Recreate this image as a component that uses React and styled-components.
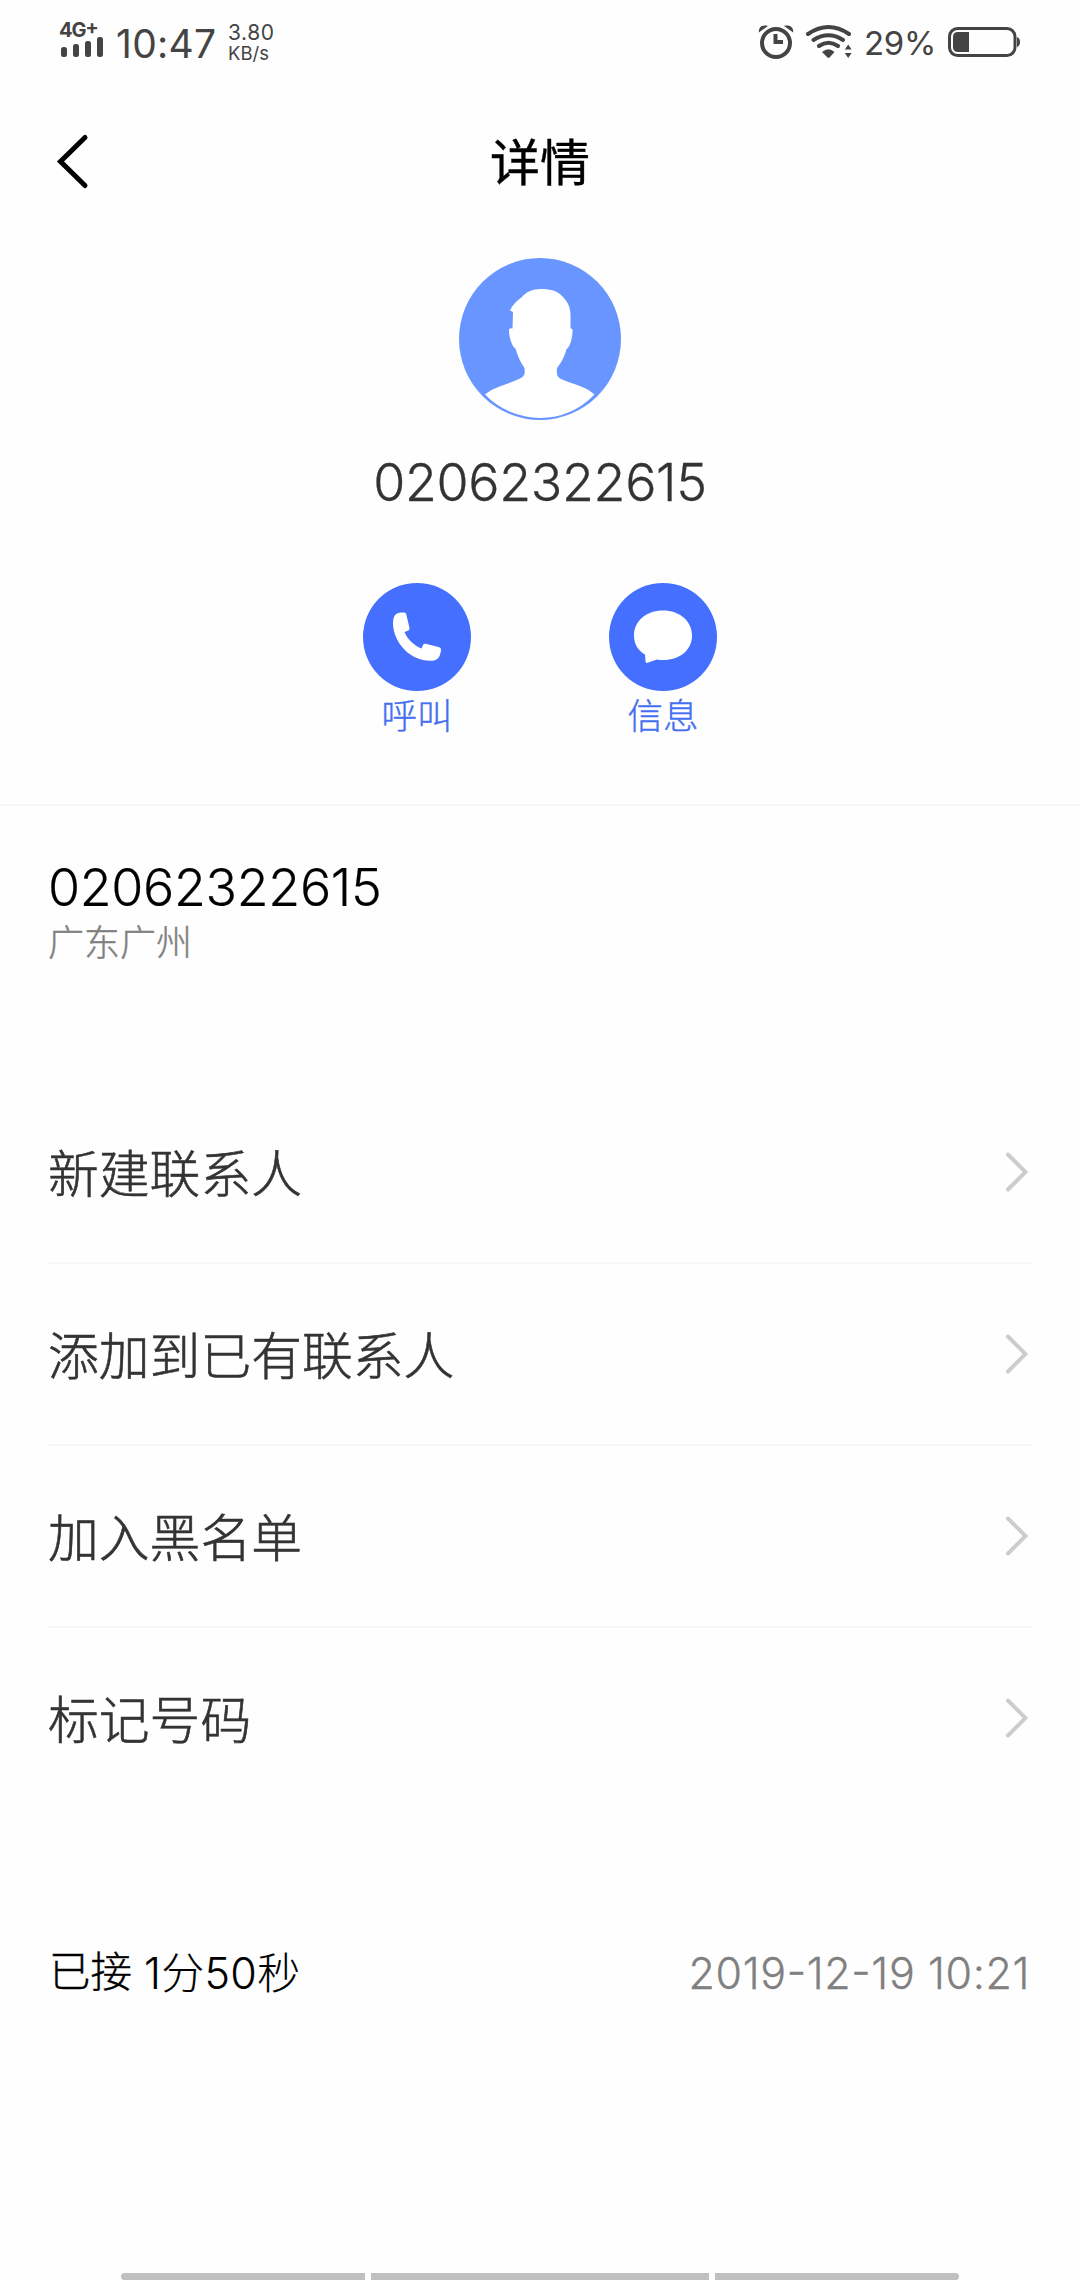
import React from "react";
import styled, { createGlobalStyle } from "styled-components";

const latin = `Inter, "Noto Sans CJK SC", sans-serif`;
const han = `"Noto Sans CJK SC", Inter, sans-serif`;

const GlobalStyle = createGlobalStyle`
  * { box-sizing: border-box; }
  body { margin: 0; background: #fefefe; }
`;

const Screen = styled.div`
  width: 1080px;
  height: 2280px;
  display: flex;
  flex-direction: column;
  background: #fefefe;
  overflow: hidden;
  font-family: ${latin};
  font-weight: 300;
  color: #000;
`;

const Text = styled.span`
  display: block;
  white-space: nowrap;
  font-family: ${(p) => (p.$han ? han : latin)};
  font-size: ${(p) => p.$size}px;
  line-height: ${(p) => p.$line}px;
  font-weight: ${(p) => p.$weight || 300};
  letter-spacing: ${(p) => p.$track || 0}px;
  font-feature-settings: "calt" 0;
  -webkit-text-stroke: ${(p) => p.$stroke || 0}px currentColor;
  color: ${(p) => p.$color || "#000"};
`;

const Raised = styled.span`
  font-feature-settings: "case" 1;
`;

const Plus = styled.span`
  display: inline-block;
  line-height: 14px;
  vertical-align: 3px;
`;

const StatusBar = styled.header`
  height: 84px;
  padding: 20px 60px 0 59px;
  display: flex;
  justify-content: space-between;
  align-items: flex-start;
`;

const StatusGroup = styled.div`
  display: flex;
  align-items: flex-start;
`;

const Signal = styled.div`
  width: 45px;
  display: flex;
  flex-direction: column;
`;

const SignalLabel = styled(Text)`
  height: 20px;
`;

const SignalBars = styled.div`
  height: 20px;
  margin: -3px 0 0 2px;
  display: flex;
  align-items: flex-end;
  gap: 6px;
`;

const SignalBar = styled.i`
  width: 6px;
  height: ${(p) => p.$h}px;
  border-radius: 2.5px;
  background: #444;
`;

const Clock = styled.div`
  margin: 0 0 0 12px;
  width: 112px;
`;

const Speed = styled.div`
  display: flex;
  flex-direction: column;
  padding-top: 2px;
`;

const StatusIcon = styled.svg`
  display: block;
  margin-left: ${(p) => p.$gap || 0}px;
`;

const Percent = styled.div`
  margin: 0 0 0 11px;
  width: 72px;
`;

const TitleBar = styled.div`
  height: 156px;
  padding: 0 54px;
  display: grid;
  grid-template-columns: 60px 1fr 60px;
  align-items: center;
`;

const TitleText = styled.h1`
  margin: 0;
  text-align: center;
  font: 400 50px/78px ${han};
  -webkit-text-stroke: 0.4px currentColor;
  padding-bottom: 6px;
`;

const Profile = styled.section`
  height: 566px;
  padding-top: 18px;
  display: flex;
  flex-direction: column;
  align-items: center;
  border-bottom: 2px solid #f7f7f7;
`;

const ProfileNumber = styled.div`
  margin-top: 31px;
`;

const Actions = styled.div`
  margin-top: 68px;
  display: flex;
  gap: 138px;
`;

const Action = styled.button`
  width: 108px;
  padding: 0;
  border: 0;
  background: none;
  display: flex;
  flex-direction: column;
  align-items: center;
`;

const ActionDisc = styled.span`
  width: 108px;
  height: 108px;
  border-radius: 50%;
  background: #446fff;
`;

const NumberBlock = styled.section`
  height: 276px;
  padding: 50px 48px 0;
`;

const Menu = styled.ul`
  margin: 0;
  padding: 0 48px;
  list-style: none;
`;

const MenuRow = styled.li`
  height: 182px;
  padding-right: 4px;
  display: flex;
  align-items: center;
  justify-content: space-between;
  border-bottom: 2px solid ${(p) => (p.$last ? "transparent" : "#f7f7f7")};
`;

const MenuLabel = styled(Text)`
  padding-bottom: 2px;
`;

const CallRecord = styled.section`
  height: 120px;
  margin-top: 103px;
  padding: 0 50px 0 49px;
  display: flex;
  align-items: center;
  justify-content: space-between;
`;

const CallResult = styled.div`
  display: flex;
  gap: 12px;
`;

const NavHints = styled.footer`
  margin-top: auto;
  height: 7px;
  display: flex;
  justify-content: center;
  gap: 6px;
`;

const NavHint = styled.i`
  width: ${(p) => p.$w}px;
  height: 7px;
  background: #c0c0c0;
  border-radius: ${(p) => p.$radius || 0};
`;

const Chevron = () => (
  <svg width="24" height="42" viewBox="0 0 24 42" fill="none">
    <path d="M4 3.500 L21.500 21 L4 38.500" stroke="#ccc" strokeWidth="4" strokeLinecap="round" />
  </svg>
);

const rows = ["新建联系人", "添加到已有联系人", "加入黑名单", "标记号码"];

export default function App() {
  return (
    <Screen>
      <GlobalStyle />
      <StatusBar>
        <StatusGroup>
          <Signal>
            <SignalLabel $size={20} $line={20} $weight={700} $color="#444" $track={-1.1}>
              4G<Plus>+</Plus>
            </SignalLabel>
            <SignalBars>
              <SignalBar $h={10} />
              <SignalBar $h={13} />
              <SignalBar $h={16} />
              <SignalBar $h={20} />
            </SignalBars>
          </Signal>
          <Clock>
            <Text $size={39} $line={48} $weight={400} $color="#444" $track={0.3}>10:47</Text>
          </Clock>
          <Speed>
            <Text $size={21} $line={22} $weight={400} $color="#444" $track={0.6}>3.80</Text>
            <Text $size={18.5} $line={18} $weight={400} $color="#444">KB/s</Text>
          </Speed>
        </StatusGroup>
        <StatusGroup>
          <StatusIcon width="36" height="40" viewBox="758 20 36 40" fill="none">
            <circle cx="776" cy="43" r="14" stroke="#444" strokeWidth="4" />
            <path d="M775.5 34 V42 H783" stroke="#444" strokeWidth="4" />
            <path d="M758.8 32.5 C758.5 27 762 24.5 768 26 Z M793.2 32.5 C793.5 27 790 24.5 784 26 Z" fill="#444" />
          </StatusIcon>
          <StatusIcon $gap={11} width="48" height="40" viewBox="805 20 48 40" fill="none">
            <path d="M808 34 Q828.500 20 849 34 M813.500 40 Q828.500 30.500 843 40 M819 46 Q828.500 39.500 838 46" stroke="#444" strokeWidth="4" strokeLinecap="round" />
            <path d="M822 52 Q828.500 46.500 834.500 52 L829.500 57.500 Q828.500 58.300 827.500 57.500 Z" fill="#444" />
            <path d="M844.800 49.500 L848.200 44.500 L851.600 49.500 Z M844.800 53 L848.200 58 L851.600 53 Z" fill="#444" />
          </StatusIcon>
          <Percent>
            <Text $size={33} $line={47} $weight={400} $color="#444" $track={-0.3}>29%</Text>
          </Percent>
          <StatusIcon $gap={11} width="73" height="40" viewBox="947 20 73 40" fill="none">
            <rect x="949.5" y="28.5" width="65.500" height="27" rx="8" stroke="#444" strokeWidth="3" />
            <path d="M958 32 H969 V52 H958 Q953 52 953 47 V37 Q953 32 958 32 Z" fill="#444" />
            <path d="M1017 37 Q1020 38 1020 42 Q1020 46 1017 47 Z" fill="#444" />
          </StatusIcon>
        </StatusGroup>
      </StatusBar>

      <TitleBar>
        <svg width="36" height="60" viewBox="54 132 36 60" fill="none">
          <path d="M85 137.500 L60.500 161.500 L85 185.500" stroke="#000" strokeWidth="5" strokeLinecap="round" />
        </svg>
        <TitleText>详情</TitleText>
      </TitleBar>

      <Profile>
        <svg width="162" height="162" viewBox="0 0 162 162">
          <circle cx="81" cy="81" r="81" fill="#6895ff" />
          <path
            fill="#fff"
            d="M26 136.500 C34 129 50 126 61 120.500 C66 118 66 115 65.500 110 C62 105 58.500 98 56.500 90.500 C53 89 50 79 50 72 Q50 69.500 53.500 70.500 L54 54 L51 52.500 C53 48 57 43 63 39 C67 34 73 31 82 31 C92 31 99 33 104 39 C109 44 111.500 50 111.500 57 V70.500 Q114 70 113.500 73 C113.500 79 111 90 107.500 91 C106 98 102 105 98 110 C97.500 116 98 119 102 121 C113 126 128 129 135.500 136.500 A77 77 0 0 1 81 160 A77 77 0 0 1 26 136.500 Z"
          />
        </svg>
        <ProfileNumber>
          <Text $size={52} $line={64} $color="#333" $track={-0.35} $stroke={0.3}>02062322615</Text>
        </ProfileNumber>
        <Actions>
          <Action>
            <ActionDisc>
              <svg width="108" height="108" viewBox="0 0 108 108">
                <path
                  fill="#fff"
                  d="M34 30.500 Q37 29 41 29.500 Q43 29.500 43.300 31.500 L46.500 45 Q46.800 47 45 47.800 L41.500 49 C44 56 51 62.500 58.500 65.500 L60 62 Q60.800 60.500 62.500 60.800 L75.500 64 Q78.200 64.500 78 67 C77.500 72 75.500 77 71 77.500 C50 80 31 62 30 41 Q29.500 33 34 30.500 Z"
                />
              </svg>
            </ActionDisc>
            <Text $han $size={35.5} $line={45} $stroke={0.4} $color="#436ff0">呼叫</Text>
          </Action>
          <Action>
            <ActionDisc>
              <svg width="108" height="108" viewBox="0 0 108 108">
                <path
                  fill="#fff"
                  d="M54 27.500 C70.500 27.500 83 38 83 52.500 C83 67 71 77 54 77 Q51 77 48 76.500 L38.500 79.800 Q36.500 80.300 36.500 78 L36 71.500 C29 67.500 25 61 25 52.500 C25 38 37.500 27.500 54 27.500 Z"
                />
              </svg>
            </ActionDisc>
            <Text $han $size={35.5} $line={45} $stroke={0.4} $color="#436ff0">信息</Text>
          </Action>
        </Actions>
      </Profile>

      <NumberBlock>
        <Text $size={52} $line={64} $track={-0.35} $stroke={0.2}>02062322615</Text>
        <Text $han $size={36} $line={40} $stroke={0.4} $color="#808080">广东广州</Text>
      </NumberBlock>

      <Menu>
        {rows.map((label, i) => (
          <MenuRow key={label} $last={i === rows.length - 1}>
            <MenuLabel $han $size={50.8} $line={76} $stroke={0.6} $color="#333">{label}</MenuLabel>
            <Chevron />
          </MenuRow>
        ))}
      </Menu>

      <CallRecord>
        <CallResult>
          <Text $size={41.5} $line={59} $stroke={0.4}>已接</Text>
          <Text $size={43} $line={60} $track={0.3} $stroke={0.1}>1分50秒</Text>
        </CallResult>
        <Text $size={43} $line={60} $track={0.6} $stroke={0.3} $color="#808080">
          <Raised>2019-12-19</Raised> 10:21
        </Text>
      </CallRecord>

      <NavHints>
        <NavHint $w={244} $radius="4px 0 0 4px" />
        <NavHint $w={338} />
        <NavHint $w={244} $radius="0 4px 4px 0" />
      </NavHints>
    </Screen>
  );
}
